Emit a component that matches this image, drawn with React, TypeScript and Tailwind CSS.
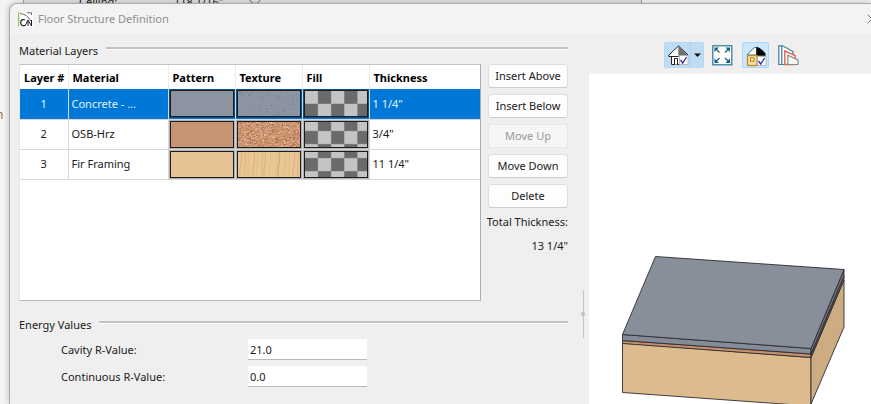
import { useState } from 'react';
import { X } from 'lucide-react';

interface Layer {
  material: string;
  thickness: string;
  color: string;
  texture: 'concrete' | 'osb' | 'fir';
  fillOffset: number;
}

const layers: Layer[] = [
  { material: 'Concrete - ...', thickness: '1 1/4"', color: '#8d94a1', texture: 'concrete', fillOffset: 0 },
  { material: 'OSB-Hrz', thickness: '3/4"', color: '#c69473', texture: 'osb', fillOffset: -4 },
  { material: 'Fir Framing', thickness: '11 1/4"', color: '#e7c294', texture: 'fir', fillOffset: -7 },
];

// Small repeatable generator so the textures look the same on every render
const noise = (seed: number) => {
  let s = seed;
  return () => {
    s = (s * 16807) % 2147483647;
    return s / 2147483647;
  };
};

const buildSpecks = (seed: number, count: number, colors: string[], maxW: number) => {
  const next = noise(seed);
  for (let i = 0; i < 10; i++) next();
  return Array.from({ length: count }, () => ({
    x: Math.floor(next() * 62),
    y: Math.floor(next() * 25),
    w: 1 + Math.floor(next() * maxW),
    fill: colors[Math.floor(next() * colors.length)],
  }));
};

const specks = {
  concrete: buildSpecks(41, 110, ['#838a97', '#888f9c', '#959ba9', '#6f7683'], 1),
  osb: buildSpecks(97, 1100, ['#bf7f59', '#d9a583', '#cc9470', '#e0b799', '#b3714c', '#d39a76'], 2),
  fir: [],
};

const grain = [3, 7, 10, 16, 19, 24, 27, 32, 38, 41, 47, 51, 56, 60];

function Texture({ layer }: { layer: Layer }) {
  return (
    <svg viewBox="0 0 62 25" preserveAspectRatio="none" className="block h-full w-full">
      <rect width="62" height="25" fill={layer.texture === 'fir' ? '#e9c796' : layer.color} />
      {specks[layer.texture].map((s, i) => (
        <rect key={i} x={s.x} y={s.y} width={s.w} height="1" fill={s.fill} />
      ))}
      {layer.texture === 'fir' &&
        grain.map((x, i) => (
          <path
            key={x}
            d={`M${x} 0 C${x + 2} 8 ${x - 2} 15 ${x + (i % 3) - 1} 27`}
            stroke={i % 3 === 0 ? '#dcaa6c' : '#e3ba84'}
            strokeWidth={i % 4 === 1 ? 1.4 : 0.8}
            fill="none"
          />
        ))}
    </svg>
  );
}

function Checker({ offset }: { offset: number }) {
  const cells = [];
  for (let row = 0; row < 3; row++) {
    for (let col = 0; col < 5; col++) {
      cells.push(
        <rect
          key={`${row}-${col}`}
          x={col * 13.6}
          y={offset + row * 13.6}
          width="13.1"
          height="13.1"
          fill={(row + col) % 2 === 0 ? '#c3c4c6' : '#6a6a6a'}
        />
      );
    }
  }
  return (
    <svg viewBox="0 0 64 26" preserveAspectRatio="none" className="block h-full w-full">
      <rect width="64" height="26" fill="#96979a" />
      {cells}
    </svg>
  );
}

function GroupTitle({ children }: { children: string }) {
  return (
    <div className="flex items-start gap-2">
      <h2>{children}</h2>
      <div className="mt-1 h-[3px] flex-1 border-t-2 border-b border-t-[#c2c2c2] border-b-white" />
    </div>
  );
}

function LayerTable({ selected, onSelect }: { selected: number; onSelect: (i: number) => void }) {
  const headers = ['Layer #', 'Material', 'Pattern', 'Texture', 'Fill', 'Thickness'];
  const swatchClass = 'ml-px h-[27px] w-16 border border-[#1c1c1c] shadow-[0_0_0_1px_rgba(0,0,0,0.3)]';

  return (
    <div className="h-[237px] min-w-0 flex-1 border border-t-[#c2c2c8] border-r-[#a9adb5] border-b-[#b3b6bd] border-l-[#e4e4e4] bg-white">
      <table className="w-full table-fixed border-collapse">
        <colgroup>
          <col className="w-12" />
          <col className="w-[100px]" />
          <col className="w-[67px]" />
          <col className="w-[67px]" />
          <col className="w-[67px]" />
          <col />
        </colgroup>
        <thead>
          <tr className="h-6 text-black">
            {headers.map((h, i) => (
              <th
                key={h}
                className={`whitespace-nowrap border-[#ececec] p-0 pt-0.5 pl-1 text-left font-bold ${i === 0 ? '' : 'border-l'}`}
              >
                {h}
              </th>
            ))}
          </tr>
        </thead>
        <tbody>
          {layers.map((layer, i) => (
            <tr
              key={layer.material}
              onClick={() => onSelect(i)}
              className={`h-[30px] border-b border-[#d8d8d8] ${i === selected ? 'bg-[#0078d7] text-[#e6f2fc]' : ''}`}
            >
              <td className="p-0 text-center">{i + 1}</td>
              <td className="truncate border-l border-[#d8d8d8] p-0 pl-[3px]">{layer.material}</td>
              <td className="border-l border-[#d8d8d8] p-0">
                <div className={swatchClass} style={{ backgroundColor: layer.color }} />
              </td>
              <td className="border-l border-[#d8d8d8] p-0">
                <div className={swatchClass}>
                  <Texture layer={layer} />
                </div>
              </td>
              <td className="border-l border-[#d8d8d8] p-0">
                <div className={swatchClass}>
                  <Checker offset={layer.fillOffset} />
                </div>
              </td>
              <td className="border-l border-[#d8d8d8] p-0 pl-[3px]">{layer.thickness}</td>
            </tr>
          ))}
        </tbody>
      </table>
    </div>
  );
}

function ActionButton({ label, disabled }: { label: string; disabled?: boolean }) {
  return (
    <button
      type="button"
      disabled={disabled}
      className="h-6 whitespace-nowrap rounded-[3px] border border-[#dedede] border-b-[#cecece] bg-[#fdfdfd] disabled:border-[#e6e6e6] disabled:bg-[#f6f6f6] disabled:text-[#999]"
    >
      {label}
    </button>
  );
}

function CheckBadge() {
  return (
    <>
      <rect x="11.5" y="10.5" width="8.5" height="9" fill="#fff" stroke="#aaa" strokeWidth="0.8" />
      <path d="M12.5 15 L14.7 18 L18.6 12" fill="none" stroke="#3530a8" strokeWidth="1.3" />
    </>
  );
}

function Toolbar() {
  return (
    <div className="flex h-10 items-start pt-2 pl-[75px]">
      <div className="flex h-[26px] rounded-[2px] border border-[#b5d9f5] bg-[#bfdcf3]">
        <button type="button" aria-label="Perspective view" className="w-[26px] border-r border-[#add3f0] pl-[3px]">
          <svg width="21" height="21" viewBox="0 0 21 21">
            <path d="M10 1 L1 9.5 V11 H3 V20 H12 V11 H10 Z" fill="#fff" />
            <path d="M10.5 1.5 L19.5 10.5 H10.5 Z" fill="#6c6e70" />
            <path d="M10.5 1 L0.8 10 V11.5 H10.5 M10.5 1 L20 10 M3.5 11.5 V19.5 H11.5" fill="none" stroke="#222" strokeWidth="1" />
            <path d="M6.5 19.5 V13.5 H9.5 V19.5" fill="#fff" stroke="#222" strokeWidth="1" />
            <CheckBadge />
          </svg>
        </button>
        <button type="button" aria-label="View options" className="flex w-3 items-center justify-center">
          <svg width="7" height="4" viewBox="0 0 7 4">
            <path d="M0 0.5 H7 L3.5 4 Z" fill="#111" />
          </svg>
        </button>
      </div>
      <button type="button" aria-label="Fill window" className="ml-2 mt-[3px]">
        <svg width="21" height="21" viewBox="0 0 21 21">
          <rect x="0.8" y="0.8" width="19" height="19" fill="#fff" stroke="#3b7d9d" strokeWidth="1.3" />
          <path d="M2.5 2.5 H7 L2.5 7 Z M18 2.5 V7 L13.5 2.5 Z M2.5 18 V13.5 L7 18 Z M18 18 H13.5 L18 13.5 Z" fill="#155f80" />
          <path d="M4 4 L7.5 7.5 M16.5 4 L13 7.5 M4 16.5 L7.5 13 M16.5 16.5 L13 13" stroke="#155f80" strokeWidth="1.2" />
        </svg>
      </button>
      <button
        type="button"
        aria-label="Color"
        className="ml-[9px] flex h-[26px] w-[27px] items-start rounded-[2px] border border-[#a9d6fa] bg-[#cce6fb] pt-[3px] pl-[3px]"
      >
        <svg width="21" height="21" viewBox="0 0 21 21">
          <path d="M1 9 L6.5 3 Q9 1 10.5 1.2 V9 Z" fill="#fff" stroke="#2f7795" strokeWidth="1" />
          <path d="M10.5 1 Q14 1 19.5 7.5 V9.8 H10.5 Z" fill="#000" />
          <rect x="1.5" y="9.5" width="9.5" height="10" fill="#fbdf9b" stroke="#c08a2c" strokeWidth="1.3" />
          <rect x="4.5" y="11.8" width="3.5" height="3.5" fill="#fff0c6" stroke="#b47c1c" strokeWidth="1" />
          <CheckBadge />
        </svg>
      </button>
      <button type="button" aria-label="Layers" className="ml-[9px] mt-[3px]">
        <svg width="21" height="21" viewBox="0 0 21 21">
          <path d="M0.8 0.8 H4.5 L15 6.5 V19.5 H0.8 Z" fill="#fff" stroke="#3b7d9d" strokeWidth="1.2" />
          <path d="M3.8 1 V19.5" stroke="#3b7d9d" strokeWidth="1.2" />
          <path d="M6.8 5.8 L17 10.5 V19.5 H6.8 Z" fill="#fff" stroke="#e2604f" strokeWidth="1.4" />
          <path d="M9.8 19.5 V10.3 L20 15 V19.5 Z" fill="#f7f7f7" stroke="#8a8a8a" strokeWidth="1.2" />
        </svg>
      </button>
    </div>
  );
}

function FloorPreview() {
  return (
    <svg
      viewBox="0 0 282 330"
      preserveAspectRatio="xMinYMin meet"
      className="h-full w-full"
      stroke="#2b2d30"
      strokeWidth="0.9"
      strokeLinejoin="round"
    >
      <path d="M33.5 269 L222 283.5 V332 L33.5 318.5 Z" fill="#debb8e" />
      <path d="M222 283.5 L255 206 V253 L222 330 Z" fill="#cdac82" />
      <path d="M33.5 266.5 L222 280 V283.5 L33.5 269.5 Z" fill="#c68f6c" />
      <path d="M222 280 L255 201.5 V206 L222 283.5 Z" fill="#7d5744" />
      <path d="M33.5 260.5 L222 274.5 V280 L33.5 266.5 Z" fill="#858b97" />
      <path d="M222 274.5 L255 195.5 V202 L222 280 Z" fill="#6c727d" />
      <path d="M66.5 182.5 L255 195.5 L222 274.5 L33.5 260.5 Z" fill="#888e9a" />
    </svg>
  );
}

function AppLogo() {
  return (
    <svg width="15" height="15" viewBox="0 0 15 15">
      <rect width="15" height="15" fill="#fff" />
      <path d="M0.7 0 V14.5" stroke="#8bbf5a" strokeWidth="1.2" />
      <path d="M2 1.5 Q9 2 13 9 M9 0.8 H13.5 V3" fill="none" stroke="#555" strokeWidth="0.9" />
      <path d="M7 8 Q3 6.5 2.7 10.5 Q3 14.5 7 13.5" fill="none" stroke="#222" strokeWidth="1.2" />
      <path d="M7 14 L10 8 V14 M10 8 L13.5 14 V8" fill="none" stroke="#222" strokeWidth="1" />
    </svg>
  );
}

export default function App() {
  const [selected, setSelected] = useState(0);
  const [cavity, setCavity] = useState('21.0');
  const [continuous, setContinuous] = useState('0.0');

  const inputClass = 'h-[21px] w-[119px] border-b border-[#b9b9b9] bg-white px-0.5 outline-none';

  return (
    <div className="relative flex h-screen overflow-hidden bg-[#f4f4f4] pt-[3px] font-['Noto_Sans','Open_Sans',sans-serif] text-[11px] leading-4 text-[#202020]">
      {/* Parent window showing behind the dialog */}
      <div className="absolute inset-x-0 top-0 flex h-6">
        <div className="ml-[23px] flex w-[619px] border-x border-[#a0a0a0] bg-[#e3e3e3]">
          <span className="-mt-[6px] ml-[55px] w-[95px]">Ceiling:</span>
          <span className="-mt-[6px] w-[75px]">118 1/16"</span>
          <span className="-mt-2 h-3 w-3 rounded-full border border-[#3b7d9d]" />
        </div>
      </div>
      <span className="absolute top-[107px] -left-1 text-xs text-[#a5664a]">n</span>

      <div className="relative ml-[9px] flex min-w-0 flex-1 flex-col rounded-tl-lg border-t border-l border-[#acacac] bg-[#efefef] shadow-[0_0_6px_rgba(0,0,0,0.25)]">
        <header className="flex h-[30px] shrink-0 items-center gap-1 overflow-hidden rounded-tl-lg bg-[#f3f3f3] pl-2">
          <AppLogo />
          <h1 className="flex-1 pl-px text-[#8f8f8f]">Floor Structure Definition</h1>
          <button type="button" aria-label="Close" className="-mr-[9px]">
            <X className="h-4 w-4 text-[#777]" strokeWidth={1.5} />
          </button>
        </header>

        <main className="flex min-h-0 flex-1">
          <section className="flex w-[558px] shrink-0 flex-col pt-[9px] pl-[9px]">
            <GroupTitle>Material Layers</GroupTitle>
            <div className="mt-[5px] flex gap-[7px]">
              <LayerTable selected={selected} onSelect={setSelected} />
              <div className="flex w-20 flex-col gap-[6px]">
                <ActionButton label="Insert Above" />
                <ActionButton label="Insert Below" />
                <ActionButton label="Move Up" disabled />
                <ActionButton label="Move Down" />
                <ActionButton label="Delete" />
                <div className="flex flex-col items-end gap-2 whitespace-nowrap">
                  <span>Total Thickness:</span>
                  <span>13 1/4"</span>
                </div>
              </div>
            </div>

            <div className="mt-4">
              <GroupTitle>Energy Values</GroupTitle>
            </div>
            <div className="mt-[6px] flex flex-col gap-[6px] pl-[42px]">
              <div className="flex items-center">
                <label htmlFor="cavity" className="w-[187px]">Cavity R-Value:</label>
                <input id="cavity" value={cavity} onChange={(e) => setCavity(e.target.value)} className={inputClass} />
              </div>
              <div className="flex items-center">
                <label htmlFor="continuous" className="w-[187px]">Continuous R-Value:</label>
                <input id="continuous" value={continuous} onChange={(e) => setContinuous(e.target.value)} className={inputClass} />
              </div>
            </div>
          </section>

          {/* Splitter handle */}
          <div className="flex w-[21px] shrink-0 justify-center pt-[256px] pl-[9px]">
            <div className="flex h-12 w-px items-center justify-center bg-[#c4c4c4]">
              <div className="h-1 w-1 shrink-0 rounded-full bg-[#c0c0c0]" />
            </div>
          </div>

          <section className="flex min-w-0 flex-1 flex-col">
            <Toolbar />
            <div className="min-h-0 flex-1 bg-white">
              <FloorPreview />
            </div>
          </section>
        </main>
      </div>
    </div>
  );
}
